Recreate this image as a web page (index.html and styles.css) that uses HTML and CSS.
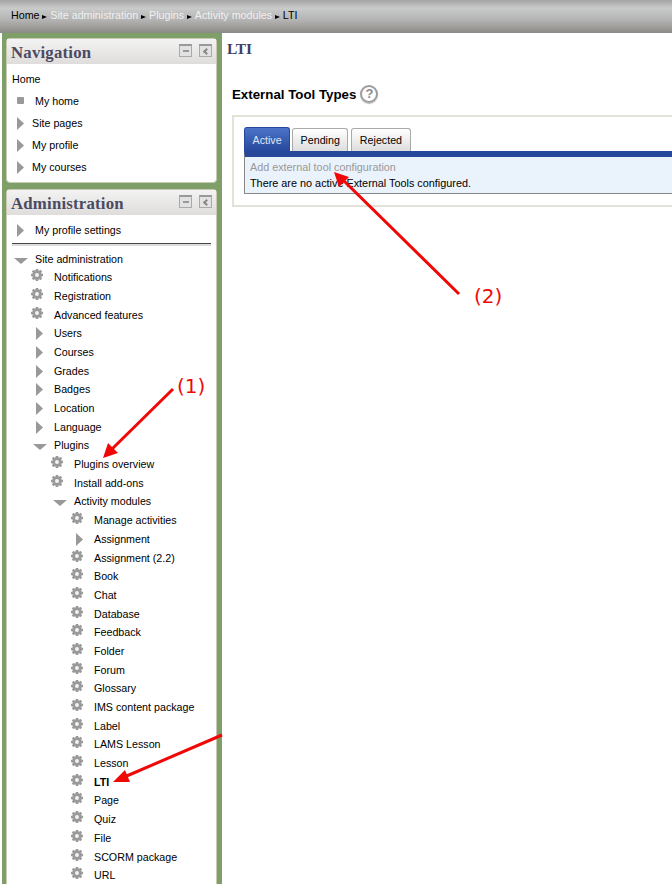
FILE: index.html
```html
<!DOCTYPE html>
<html lang="en">
<head>
  <meta charset="UTF-8">
  <meta name="viewport" content="width=device-width, initial-scale=1.0">
  <title>LTI</title>
  <link rel="stylesheet" href="styles.css">
</head>
<body>
  <svg class="defs" width="0" height="0">
    <symbol id="gear" viewBox="0 0 24 18">
      <g transform="translate(7 7) scale(.86) translate(-12 -9)">
        <path d="M10.500 2h3v1.600l1.300.5 1.200-1.100 2 2-1.100 1.200.5 1.300H19v3h-1.600l-.5 1.300 1.100 1.200-2 2-1.200-1.100-1.300.5V16h-3v-1.600l-1.300-.5-1.200 1.100-2-2 1.100-1.200-.5-1.300H5v-3h1.600l.5-1.300L6 5 8 3l1.200 1.100 1.300-.5z" fill="#9a9a9a"/>
        <circle cx="12" cy="9" r="2.300" fill="#f2f2f2"/>
      </g>
    </symbol>
    <symbol id="closed" viewBox="0 0 24 18">
      <path d="M6 3l7 6.500-7 6.500z" fill="#999"/>
    </symbol>
    <symbol id="open" viewBox="0 0 24 18">
      <path d="M3 8h14l-7 6z" fill="#999"/>
    </symbol>
    <symbol id="square" viewBox="0 0 24 18">
      <rect x="6" y="5" width="7" height="7" rx="1" fill="#999"/>
    </symbol>
  </svg>

  <header class="topbar">
    <a class="crumb dark">Home</a><span class="sep"></span>
    <a class="crumb">Site administration</a><span class="sep"></span>
    <a class="crumb">Plugins</a><span class="sep"></span>
    <a class="crumb">Activity modules</a><span class="sep"></span>
    <span class="crumb dark">LTI</span>
  </header>

  <div class="page">
    <aside class="sidebar">
      <section class="block">
        <div class="block-head">
          <h2>Navigation</h2>
          <span class="ctl"><i class="minus"></i></span>
          <span class="ctl ctl-left"><i class="chev"></i></span>
        </div>
        <ul class="navlist">
          <li class="home">Home</li>
          <li><svg class="ico"><use href="#square"/></svg>My home</li>
          <li class="short"><svg class="ico"><use href="#closed"/></svg>Site pages</li>
          <li class="short"><svg class="ico"><use href="#closed"/></svg>My profile</li>
          <li class="short"><svg class="ico"><use href="#closed"/></svg>My courses</li>
        </ul>
      </section>

      <section class="block block-admin">
        <div class="block-head">
          <h2>Administration</h2>
          <span class="ctl"><i class="minus"></i></span>
          <span class="ctl ctl-left"><i class="chev"></i></span>
        </div>
        <div class="profile-row"><svg class="ico"><use href="#closed"/></svg>My profile settings</div>
        <div class="rule"></div>
        <ul class="tree">
          <li><div class="row"><svg class="ico"><use href="#open"/></svg>Site administration</div>
            <ul class="sub first">
              <li class="row"><svg class="ico"><use href="#gear"/></svg>Notifications</li>
              <li class="row"><svg class="ico"><use href="#gear"/></svg>Registration</li>
              <li class="row"><svg class="ico"><use href="#gear"/></svg>Advanced features</li>
              <li class="row"><svg class="ico"><use href="#closed"/></svg>Users</li>
              <li class="row"><svg class="ico"><use href="#closed"/></svg>Courses</li>
              <li class="row"><svg class="ico"><use href="#closed"/></svg>Grades</li>
              <li class="row"><svg class="ico"><use href="#closed"/></svg>Badges</li>
              <li class="row"><svg class="ico"><use href="#closed"/></svg>Location</li>
              <li class="row"><svg class="ico"><use href="#closed"/></svg>Language</li>
              <li><div class="row"><svg class="ico"><use href="#open"/></svg>Plugins</div>
                <ul class="sub">
                  <li class="row"><svg class="ico"><use href="#gear"/></svg>Plugins overview</li>
                  <li class="row"><svg class="ico"><use href="#gear"/></svg>Install add-ons</li>
                  <li><div class="row"><svg class="ico"><use href="#open"/></svg>Activity modules</div>
                    <ul class="sub">
                      <li class="row"><svg class="ico"><use href="#gear"/></svg>Manage activities</li>
                      <li class="row"><svg class="ico"><use href="#closed"/></svg>Assignment</li>
                      <li class="row"><svg class="ico"><use href="#gear"/></svg>Assignment (2.2)</li>
                      <li class="row"><svg class="ico"><use href="#gear"/></svg>Book</li>
                      <li class="row"><svg class="ico"><use href="#gear"/></svg>Chat</li>
                      <li class="row"><svg class="ico"><use href="#gear"/></svg>Database</li>
                      <li class="row"><svg class="ico"><use href="#gear"/></svg>Feedback</li>
                      <li class="row"><svg class="ico"><use href="#gear"/></svg>Folder</li>
                      <li class="row"><svg class="ico"><use href="#gear"/></svg>Forum</li>
                      <li class="row"><svg class="ico"><use href="#gear"/></svg>Glossary</li>
                      <li class="row"><svg class="ico"><use href="#gear"/></svg>IMS content package</li>
                      <li class="row"><svg class="ico"><use href="#gear"/></svg>Label</li>
                      <li class="row"><svg class="ico"><use href="#gear"/></svg>LAMS Lesson</li>
                      <li class="row"><svg class="ico"><use href="#gear"/></svg>Lesson</li>
                      <li class="row current"><svg class="ico"><use href="#gear"/></svg>LTI</li>
                      <li class="row"><svg class="ico"><use href="#gear"/></svg>Page</li>
                      <li class="row"><svg class="ico"><use href="#gear"/></svg>Quiz</li>
                      <li class="row"><svg class="ico"><use href="#gear"/></svg>File</li>
                      <li class="row"><svg class="ico"><use href="#gear"/></svg>SCORM package</li>
                      <li class="row"><svg class="ico"><use href="#gear"/></svg>URL</li>
                    </ul>
                  </li>
                </ul>
              </li>
            </ul>
          </li>
        </ul>
      </section>
    </aside>

    <main class="content">
      <h1>LTI</h1>
      <div class="types-title">
        <h3>External Tool Types</h3>
        <span class="help">?</span>
      </div>
      <div class="types-box">
        <div class="tabs">
          <span class="tab active">Active</span>
          <span class="tab">Pending</span>
          <span class="tab">Rejected</span>
        </div>
        <div class="tab-panel">
          <a class="add-link">Add external tool configuration</a>
          <p>There are no active External Tools configured.</p>
        </div>
      </div>
    </main>
  </div>

  <!-- red annotations drawn on top of the screenshot -->
  <svg class="notes" width="672" height="884" viewBox="0 0 672 884">
    <g stroke="#f00807" stroke-width="3" fill="none">
      <path d="M173 389L110 451"/>
      <path d="M459 294L342 179"/>
      <path d="M222 735L122 778"/>
    </g>
    <g fill="#f00807">
      <path d="M103 458L108 443L118 453z"/>
      <path d="M334 172L349 177L339 187z"/>
      <path d="M113 782L125 770L130 782z"/>
    </g>
    <text x="177" y="393">(1)</text>
    <text x="474" y="303">(2)</text>
  </svg>
</body>
</html>
```

FILE: styles.css
```css
html, body {
  margin: 0;
  height: 100%;
}
body {
  height: 884px;
  overflow: hidden;
  position: relative;
  background: #fff;
  font-family: "Liberation Sans", Arial, sans-serif;
  font-size: 10.7px;
  color: #000;
}
ul {
  list-style: none;
  margin: 0;
  padding: 0;
}
.defs {
  position: absolute;
}

/* top bar */
.topbar {
  height: 33px;
  box-sizing: border-box;
  padding: 0 0 3px 11px;
  display: flex;
  align-items: center;
  background: linear-gradient(#a4a4a4, #c9caca 25%, #b4b4b4 60%, #8c8a86);
  white-space: nowrap;
}
.crumb {
  color: #f0f0f0;
}
.crumb.dark {
  color: #000;
}
.sep {
  width: 0;
  height: 0;
  margin: 3px 2.900px 0;
  border-left: 5px solid #000;
  border-top: 2.500px solid transparent;
  border-bottom: 2.500px solid transparent;
}

.page {
  display: flex;
  height: 851px;
}

/* left column */
.sidebar {
  width: 220px;
  flex-shrink: 0;
  margin-left: 2px;
  box-sizing: border-box;
  padding: 5px 4px 0;
  background: #7f9f69;
  overflow: hidden;
}
.block {
  width: 211px;
  box-sizing: border-box;
  background: #fff;
  border: 1px solid #c9c8b0;
  border-radius: 4px;
  margin-bottom: 6px;
}
.block-admin {
  border-radius: 4px 4px 0 0;
  padding-bottom: 40px;
}
.block-head {
  height: 25px;
  display: flex;
  align-items: center;
  padding: 2px 4px 0 4px;
  box-sizing: border-box;
  background: linear-gradient(#f3f3f3, #dfdddb);
}
.block-head h2 {
  flex: 1;
  margin: 0;
  font-family: "Liberation Serif", serif;
  font-size: 16.800px;
  font-weight: bold;
  letter-spacing: 0.200px;
  color: #4b4a63;
}
.ctl {
  width: 11px;
  height: 10px;
  margin: -4px 0 0 7px;
  border: 1px solid #aaa;
  border-top: 2px solid #999;
  background: #e2e2e2;
  display: flex;
  align-items: center;
  justify-content: center;
}
.ctl-left {
  margin-left: 7px;
}
.minus {
  width: 6px;
  height: 2px;
  background: #999;
}
.chev {
  width: 3px;
  height: 3px;
  border-left: 2px solid #888;
  border-bottom: 2px solid #888;
  transform: rotate(45deg);
  margin-left: 2px;
}

.ico {
  width: 24px;
  height: 18px;
  flex-shrink: 0;
}
.navlist {
  padding: 4px 0 4px 5px;
}
.navlist li {
  height: 22px;
  display: flex;
  align-items: center;
  margin-left: -1px;
}
.navlist .home {
  margin-left: 0;
}
.navlist .short .ico {
  margin-right: -3px;
}
.profile-row {
  height: 20px;
  margin: 5px 0 0 4px;
  display: flex;
  align-items: center;
}
.rule {
  height: 1px;
  margin: 3px 5px 0 5px;
  background: #444;
  border-bottom: 2px solid #ddd;
}

/* admin tree */
.tree {
  padding: 3.200px 0 0 4px;
}
.row {
  height: 18.700px;
  display: flex;
  align-items: center;
  white-space: nowrap;
}
.sub {
  margin-left: 20px;
}
.sub.first {
  margin-left: 19px;
}
.current {
  font-weight: bold;
}

/* main column */
.content {
  flex: 1;
  min-width: 0;
  padding: 0 0 0 5px;
  overflow: hidden;
}
.content h1 {
  margin: 7px 0 0;
  font-family: "Liberation Serif", serif;
  font-size: 15.400px;
  font-weight: bold;
  color: #3f3f66;
}
.types-title {
  display: flex;
  align-items: center;
  margin: 27px 0 0 5px;
  height: 18px;
}
.types-title h3 {
  margin: 0;
  font-size: 13.300px;
  font-weight: bold;
}
.help {
  width: 14px;
  height: 14px;
  margin-left: 4px;
  border: 2px solid #9c9c9c;
  border-radius: 50%;
  text-align: center;
  line-height: 14px;
  font-size: 13px;
  font-weight: bold;
  color: #8a8a8a;
  box-shadow: 0 1px 1px #bbb;
}
.types-box {
  width: 500px;
  height: 92px;
  margin: 12px 0 0 5px;
  padding: 10px;
  box-sizing: border-box;
  border: 2px solid #e3e2d8;
}
.tabs {
  display: flex;
  gap: 2px;
  height: 24px;
  align-items: flex-end;
}
.tab {
  height: 23px;
  box-sizing: border-box;
  padding: 0 7.500px;
  display: flex;
  align-items: center;
  border: 1px solid #aaa;
  border-bottom: 0;
  border-radius: 3px 3px 0 0;
  background: linear-gradient(#fff, #ddd);
}
.tab:last-child {
  margin-left: 1px;
}
.tab.active {
  height: 24px;
  color: #dfe7f5;
  border-color: #26479a;
  background: linear-gradient(#4a74c8, #28489c);
}
.tab-panel {
  border-top: 6px solid #26479a;
  border-left: 1px solid #888;
  border-bottom: 1px solid #888;
  background: #eaf2fb;
  padding: 2px 0 2px 5px;
  line-height: 16px;
  font-size: 10.800px;
}
.add-link {
  color: #999;
  display: block;
}
.tab-panel p {
  margin: 0;
  font-size: 10.850px;
}

/* annotations */
.notes {
  position: absolute;
  top: 0;
  left: 0;
  pointer-events: none;
}
.notes text {
  font-family: "DejaVu Sans", sans-serif;
  font-size: 20px;
  fill: #f00807;
}
```
